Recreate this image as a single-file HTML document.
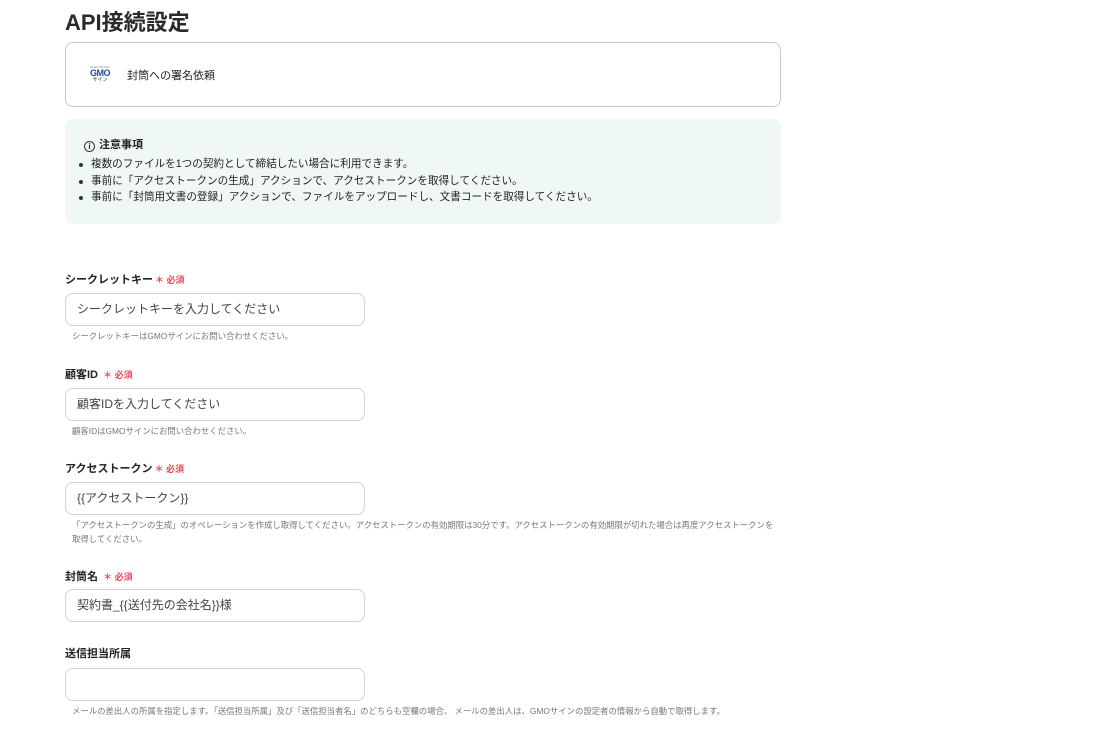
<!DOCTYPE html><html><head><meta charset="utf-8"><style>
body{margin:0;width:1108px;height:729px;background:#fff;font-family:"Liberation Sans","Noto Sans CJK JP",sans-serif;color:#222;position:relative;overflow:hidden}
.a{position:absolute;white-space:nowrap}
h1{position:absolute;left:65px;top:5px;margin:0;font-size:22px;font-weight:bold;color:#2a2a2a}
.card{position:absolute;left:65px;top:42px;width:714px;height:63px;border:1px solid #c8c8cc;border-radius:8px}
.note{position:absolute;left:65px;top:119px;width:716px;height:105px;background:#f0f8f7;border-radius:8px}
.lbl{position:absolute;left:65px;font-size:11px;font-weight:bold;color:#222}
.req{color:#e8465a;font-size:9px;margin-left:2px}
.in{position:absolute;left:65px;border:1px solid #cfd2d8;border-radius:8px;font-size:12px;color:#444;line-height:31px;padding-left:11px;box-sizing:border-box;width:300px;height:33px}
.hint{position:absolute;left:72px;font-size:8.4px;color:#777;white-space:nowrap}
ul{margin:0;padding:0;list-style:none}
li{font-size:10.6px;line-height:16.5px;color:#222;position:relative;padding-left:14px}
li:before{content:"";position:absolute;left:2px;top:7px;width:4px;height:4px;border-radius:50%;background:#333}
</style></head><body>
<h1>API接続設定</h1>
<div class="card">
 <div class="a" style="left:20px;top:23px;width:28px;text-align:center;line-height:1">
  <div style="font-size:3px;color:#888">ELECTRONIC</div>
  <div style="font-size:9px;font-weight:bold;color:#1a4fa0;letter-spacing:-0.5px">GMO</div>
  <div style="font-size:5px;color:#333">サイン</div>
 </div>
 <div class="a" style="left:61px;top:24px;font-size:11px">封筒への署名依頼</div>
</div>
<div class="note">
 <div class="a" style="left:19px;top:17px;font-size:11px;font-weight:bold"><span style="display:inline-block;width:9px;height:9px;border:1.2px solid #333;border-radius:50%;font-size:8px;line-height:9px;text-align:center;vertical-align:-1px;margin-right:4px">i</span>注意事項</div>
 <ul class="a" style="left:12px;top:37px">
  <li>複数のファイルを1つの契約として締結したい場合に利用できます。</li>
  <li>事前に「アクセストークンの生成」アクションで、アクセストークンを取得してください。</li>
  <li>事前に「封筒用文書の登録」アクションで、ファイルをアップロードし、文書コードを取得してください。</li>
 </ul>
</div>
<div class="lbl" style="top:271px">シークレットキー<span class="req">＊ 必須</span></div>
<div class="in" style="top:293px">シークレットキーを入力してください</div>
<div class="hint" style="top:330px">シークレットキーはGMOサインにお問い合わせください。</div>
<div class="lbl" style="top:366px">顧客ID <span class="req">＊ 必須</span></div>
<div class="in" style="top:388px">顧客IDを入力してください</div>
<div class="hint" style="top:425px">顧客IDはGMOサインにお問い合わせください。</div>
<div class="lbl" style="top:460px">アクセストークン<span class="req">＊ 必須</span></div>
<div class="in" style="top:482px">{{アクセストークン}}</div>
<div class="hint" style="top:518px;line-height:14px">「アクセストークンの生成」のオペレーションを作成し取得してください。アクセストークンの有効期限は30分です。アクセストークンの有効期限が切れた場合は再度アクセストークンを<br>取得してください。</div>
<div class="lbl" style="top:568px">封筒名 <span class="req">＊ 必須</span></div>
<div class="in" style="top:589px">契約書_{{送付先の会社名}}様</div>
<div class="lbl" style="top:645px">送信担当所属</div>
<div class="in" style="top:668px"></div>
<div class="hint" style="top:705px">メールの差出人の所属を指定します。「送信担当所属」及び「送信担当者名」のどちらも空欄の場合、 メールの差出人は、GMOサインの設定者の情報から自動で取得します。</div>
</body></html>
